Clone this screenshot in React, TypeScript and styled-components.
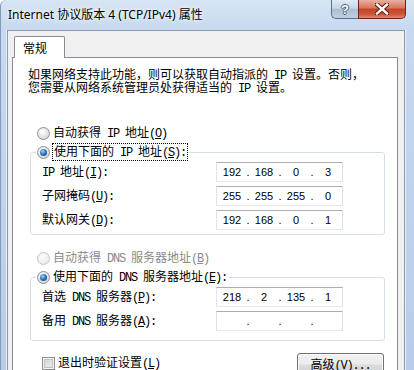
import React from "react";
import styled, { createGlobalStyle, css } from "styled-components";

const CJK = `"Noto Sans CJK SC", "Noto Sans", sans-serif`;

const GlobalStyle = createGlobalStyle`
  html, body { margin: 0; padding: 0; background: #ffffff; }
  body { font-family: ${CJK}; font-size: 12px; color: #000; }
  * { box-sizing: border-box; }
`;

/* ---------- text helper: SimSun-like half-width latin ---------- */
const Txt = styled.span`
  white-space: pre;
  line-height: 13px;
`;

const Lat = styled.span`
  font-family: "Liberation Mono", monospace;
  font-size: 12px;
  letter-spacing: -1.2px;
`;

function T({ s }: { s: string }) {
  const runs: { text: string; ascii: boolean; u: boolean }[] = [];
  let under = false;
  for (const ch of s) {
    if (ch === "&") {
      under = true;
      continue;
    }
    const ascii = ch.charCodeAt(0) < 128;
    const last = runs[runs.length - 1];
    if (last && last.ascii === ascii && !last.u && !under) {
      last.text += ch;
    } else {
      runs.push({ text: ch, ascii, u: under });
    }
    under = false;
  }
  return (
    <Txt>
      {runs.map((r, i) => {
        const inner = r.u ? <u>{r.text}</u> : r.text;
        return r.ascii ? <Lat key={i}>{inner}</Lat> : <React.Fragment key={i}>{inner}</React.Fragment>;
      })}
    </Txt>
  );
}

/* ---------- window chrome ---------- */
const Window = styled.div`
  width: 414px;
  height: 370px;
  overflow: hidden;
  display: flex;
  flex-direction: column;
  background: linear-gradient(180deg, #d7e5f5 0px, #c6d9ef 30px, #b7cdeb 370px);
  border-left: 1px solid #8399bb;
  border-top-left-radius: 6px;
`;

const TitleBar = styled.div`
  height: 30px;
  flex: none;
  display: flex;
  align-items: flex-start;
  padding: 0 8px 0 7px;
`;

const Title = styled.div`
  margin-top: 7px;
  font-family: "Noto Sans", "Noto Sans CJK SC", sans-serif;
  font-size: 12px;
  line-height: 16px;
  color: #000;
  white-space: nowrap;
  text-shadow: 0 0 6px rgba(255, 255, 255, 0.95), 0 0 3px rgba(255, 255, 255, 0.9);
`;

const Caption = styled.div`
  margin-left: auto;
  display: flex;
`;

const CaptionBtn = styled.div<{ $kind: "help" | "close" }>`
  height: 19px;
  display: flex;
  align-items: center;
  justify-content: center;
  border-style: solid;
  border-width: 0 1px 1px 1px;
  ${(p) =>
    p.$kind === "help"
      ? css`
          width: 27px;
          border-color: #5b6f8e;
          border-right-width: 0;
          border-radius: 0 0 0 5px;
          background: linear-gradient(180deg, #e2eaf4 0%, #c9d6e6 45%, #aebfd6 52%, #bfcee1 100%);
        `
      : css`
          width: 48px;
          border-color: #6e2417;
          border-radius: 0 0 5px 0;
          background: linear-gradient(180deg, #eab0a0 0%, #d77a61 42%, #c5452c 52%, #cc5337 78%, #e18a6a 100%);
        `}
`;

const HelpGlyph = styled.span`
  font-family: "Liberation Sans", sans-serif;
  font-weight: bold;
  font-size: 13px;
  line-height: 13px;
  color: #ffffff;
  text-shadow: -1px 0 0 #4a5d7b, 1px 0 0 #4a5d7b, 0 -1px 0 #4a5d7b, 0 1px 0 #4a5d7b;
`;

/* ---------- client area ---------- */
const Client = styled.div`
  flex: 1;
  margin: 0 9px 0 6px;
  background: #f0f0f0;
  border: 1px solid #8a9ab3;
  border-bottom: none;
  padding: 5px 6px 0 4px;
  display: flex;
  flex-direction: column;
  box-shadow: -1px 0 0 #e6eef9, 1px 0 0 #e6eef9;
`;

const TabStrip = styled.div`
  display: flex;
  padding-left: 2px;
`;

const Tab = styled.div`
  width: 51px;
  height: 22px;
  border: 1px solid #898c95;
  border-bottom: none;
  border-radius: 2px 2px 0 0;
  background: #ffffff;
  padding-left: 8px;
  line-height: 21px;
  font-size: 12px;
  margin-bottom: -1px;
  position: relative;
  z-index: 1;
`;

const Panel = styled.div`
  flex: 1;
  border: 1px solid #898c95;
  background: #ffffff;
  padding: 10px 12px 0 15px;
  display: flex;
  flex-direction: column;
`;

const Intro = styled.div`
  display: flex;
  flex-direction: column;
`;

const IntroLine = styled.div`
  height: 13px;
  display: flex;
  align-items: center;
  font-size: 12px;
  white-space: nowrap;
`;

const OptionRow = styled.div<{ $top?: number; $disabled?: boolean }>`
  display: flex;
  align-items: center;
  gap: 3px;
  height: 16px;
  margin-top: ${(p) => p.$top ?? 0}px;
  padding-left: ${(p) => (p.$top !== undefined ? 9 : 0)}px;
  color: ${(p) => (p.$disabled ? "#8a8a8a" : "#000")};
  white-space: nowrap;
  font-size: 12px;
`;

const Radio = styled.span<{ $checked?: boolean; $disabled?: boolean }>`
  flex: none;
  width: 13px;
  height: 13px;
  border-radius: 50%;
  border: 1px solid ${(p) => (p.$disabled ? "#c6c6c6" : "#8e8f8f")};
  background: ${(p) =>
    p.$disabled
      ? "radial-gradient(circle at 40% 35%, #fbfbfb 0%, #ececec 70%)"
      : "radial-gradient(circle at 40% 35%, #ffffff 0%, #e2e2e2 55%, #c9c9c9 100%)"};
  display: flex;
  align-items: center;
  justify-content: center;
  &::after {
    content: "";
    display: ${(p) => (p.$checked ? "block" : "none")};
    width: 7px;
    height: 7px;
    border-radius: 50%;
    background: radial-gradient(circle at 40% 35%, #9fdcfb 0%, #2d78c4 45%, #133866 100%);
  }
`;

const Focus = styled.span`
  display: flex;
  align-items: center;
  height: 16px;
  outline: 1px dotted #000;
  padding: 0 1px;
`;

const Group = styled.fieldset<{ $top: number }>`
  margin: ${(p) => p.$top}px 0 0 2px;
  padding: 0;
  border: 1px solid #d5dfe5;
  border-radius: 3px;
  min-width: 0;
`;

const Legend = styled.legend`
  margin-left: 5px;
  padding: 0 2px 0 1px;
  height: 16px;
`;

const FieldGrid = styled.div<{ $bottom: number }>`
  display: grid;
  grid-template-columns: 174px 127px;
  row-gap: 4px;
  align-items: center;
  padding: 2px 0 ${(p) => p.$bottom}px 11px;
`;

const FieldLabel = styled.div`
  display: flex;
  align-items: center;
  height: 20px;
  font-size: 12px;
  white-space: nowrap;
`;

const IpBox = styled.div`
  width: 127px;
  height: 20px;
  border: 1px solid;
  border-color: #abadb3 #dbdfe6 #e3e9ef #e2e3ea;
  background: #ffffff;
  display: grid;
  grid-template-columns: 26px 6px 26px 6px 26px 6px 26px;
  padding-left: 2px;
  align-items: center;
  font-family: "Liberation Sans", sans-serif;
  font-size: 11px;
  line-height: 18px;
  color: #000;
`;

const Octet = styled.span`
  text-align: center;
`;

const Dot = styled.span`
  text-align: center;
`;

const Footer = styled.div`
  margin-top: 12px;
  display: flex;
  justify-content: space-between;
  align-items: flex-start;
  padding: 0 1px 0 14px;
`;

const CheckRow = styled.div`
  margin-top: 2px;
  display: flex;
  align-items: center;
  gap: 3px;
  height: 16px;
  font-size: 12px;
  white-space: nowrap;
`;

const CheckBox = styled.span`
  flex: none;
  width: 13px;
  height: 13px;
  border: 1px solid #8e8f8f;
  box-shadow: inset 0 0 0 1px #f4f4f4, inset 0 0 0 2px #c3c3c3;
  background-image: linear-gradient(135deg, #cfcfcf 0%, #f2f2f2 100%);
`;

const Button = styled.div`
  width: 87px;
  height: 23px;
  border: 1px solid #707070;
  border-radius: 3px;
  background: linear-gradient(180deg, #f2f2f2 0%, #ebebeb 48%, #dddddd 52%, #cfcfcf 100%);
  box-shadow: inset 0 0 0 1px #fcfcfc;
  display: flex;
  align-items: center;
  justify-content: center;
  font-size: 12px;
  white-space: nowrap;
`;

function IpField({ value }: { value: string[] }) {
  return (
    <IpBox>
      <Octet>{value[0]}</Octet>
      <Dot>.</Dot>
      <Octet>{value[1]}</Octet>
      <Dot>.</Dot>
      <Octet>{value[2]}</Octet>
      <Dot>.</Dot>
      <Octet>{value[3]}</Octet>
    </IpBox>
  );
}

export default function App() {
  return (
    <>
      <GlobalStyle />
      <Window>
        <TitleBar>
          <Title>Internet 协议版本 4 (TCP/IPv4) 属性</Title>
          <Caption>
            <CaptionBtn $kind="help">
              <HelpGlyph>?</HelpGlyph>
            </CaptionBtn>
            <CaptionBtn $kind="close">
              <svg width="14" height="12" viewBox="0 0 14 12">
                <path d="M2 1.5 L12 10.5 M12 1.5 L2 10.5" stroke="#5a1a10" strokeWidth="4.4" strokeLinecap="square" />
                <path d="M2 1.5 L12 10.5 M12 1.5 L2 10.5" stroke="#ffffff" strokeWidth="2.4" strokeLinecap="square" />
              </svg>
            </CaptionBtn>
          </Caption>
        </TitleBar>
        <Client>
          <TabStrip>
            <Tab>常规</Tab>
          </TabStrip>
          <Panel>
            <Intro>
              <IntroLine>
                <T s="如果网络支持此功能，则可以获取自动指派的 IP 设置。否则，" />
              </IntroLine>
              <IntroLine>
                <T s="您需要从网络系统管理员处获得适当的 IP 设置。" />
              </IntroLine>
            </Intro>

            <OptionRow $top={31}>
              <Radio />
              <T s="自动获得 IP 地址(&O)" />
            </OptionRow>

            <Group $top={3}>
              <Legend>
                <OptionRow>
                  <Radio $checked />
                  <Focus>
                    <T s="使用下面的 IP 地址(&S):" />
                  </Focus>
                </OptionRow>
              </Legend>
              <FieldGrid $bottom={4}>
                <FieldLabel>
                  <T s="IP 地址(&I):" />
                </FieldLabel>
                <IpField value={["192", "168", "0", "3"]} />
                <FieldLabel>
                  <T s="子网掩码(&U):" />
                </FieldLabel>
                <IpField value={["255", "255", "255", "0"]} />
                <FieldLabel>
                  <T s="默认网关(&D):" />
                </FieldLabel>
                <IpField value={["192", "168", "0", "1"]} />
              </FieldGrid>
            </Group>

            <OptionRow $top={15} $disabled>
              <Radio $disabled />
              <T s="自动获得 DNS 服务器地址(&B)" />
            </OptionRow>

            <Group $top={3}>
              <Legend>
                <OptionRow>
                  <Radio $checked />
                  <T s="使用下面的 DNS 服务器地址(&E):" />
                </OptionRow>
              </Legend>
              <FieldGrid $bottom={9}>
                <FieldLabel>
                  <T s="首选 DNS 服务器(&P):" />
                </FieldLabel>
                <IpField value={["218", "2", "135", "1"]} />
                <FieldLabel>
                  <T s="备用 DNS 服务器(&A):" />
                </FieldLabel>
                <IpField value={["", "", "", ""]} />
              </FieldGrid>
            </Group>

            <Footer>
              <CheckRow>
                <CheckBox />
                <T s="退出时验证设置(&L)" />
              </CheckRow>
              <Button>
                <T s="高级(&V)..." />
              </Button>
            </Footer>
          </Panel>
        </Client>
      </Window>
    </>
  );
}
